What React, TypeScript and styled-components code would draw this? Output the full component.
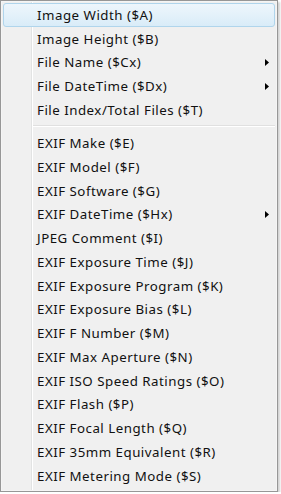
import React from 'react'
import styled, { createGlobalStyle, css } from 'styled-components'

const GlobalStyle = createGlobalStyle`
    html, body {
        margin: 0;
        padding: 0;
        background: #fff;
    }
    body {
        font-family: 'Noto Sans', 'Open Sans', sans-serif;
    }
`

const Menu = styled.div`
    width: 272px;
    padding: 2px 2px 4px;
    border: 1px solid #979797;
    box-shadow: inset 0 0 0 1px #f5f5f5, 2px 2px 2px rgba(0, 0, 0, 0.18);
    /* icon gutter line */
    background: linear-gradient(
        to right,
        #f0f0f0 30px,
        #e2e3e3 30px,
        #e2e3e3 31px,
        #ffffff 31px,
        #ffffff 32px,
        #f0f0f0 32px
    );
`

const Item = styled.div<{ $active?: boolean }>`
    box-sizing: border-box;
    height: 23.75px;
    display: flex;
    align-items: center;
    padding: 0 0 0 33px;
    border: 1px solid transparent;
    border-radius: 3px;
    font-size: 13.3px;
    letter-spacing: 0.5px;
    color: #111;
    white-space: nowrap;
    ${(p) =>
        p.$active &&
        css`
            border-color: #b0d5ec;
            background: linear-gradient(to bottom, #eef6fc, #d9ecf8);
        `}
`

const Label = styled.span`
    flex: 1;
`

const Arrow = styled.svg`
    width: 4px;
    height: 7px;
    margin-right: 5px;
`

const Separator = styled.div`
    height: 9.4px;
    margin-left: 30px;
    display: flex;
    align-items: center;
    &::after {
        content: '';
        flex: 1;
        height: 1px;
        border-bottom: 1px solid #fff;
        background: #e0e0e0;
    }
`

const first = [
    { label: 'Image Width ($A)', active: true },
    { label: 'Image Height ($B)' },
    { label: 'File Name ($Cx)', sub: true },
    { label: 'File DateTime ($Dx)', sub: true },
    { label: 'File Index/Total Files ($T)' },
]

const second = [
    { label: 'EXIF Make ($E)' },
    { label: 'EXIF Model ($F)' },
    { label: 'EXIF Software ($G)' },
    { label: 'EXIF DateTime ($Hx)', sub: true },
    { label: 'JPEG Comment ($I)' },
    { label: 'EXIF Exposure Time ($J)' },
    { label: 'EXIF Exposure Program ($K)' },
    { label: 'EXIF Exposure Bias ($L)' },
    { label: 'EXIF F Number ($M)' },
    { label: 'EXIF Max Aperture ($N)' },
    { label: 'EXIF ISO Speed Ratings ($O)' },
    { label: 'EXIF Flash ($P)' },
    { label: 'EXIF Focal Length ($Q)' },
    { label: 'EXIF 35mm Equivalent ($R)' },
    { label: 'EXIF Metering Mode ($S)' },
]

type Entry = { label: string; active?: boolean; sub?: boolean }

function MenuItem({ label, active, sub }: Entry) {
    return (
        <Item $active={active}>
            <Label>{label}</Label>
            {sub && (
                <Arrow viewBox="0 0 4 7">
                    <polygon points="0,0 4,3.5 0,7" fill="#000" />
                </Arrow>
            )}
        </Item>
    )
}

export default function App() {
    return (
        <>
            <GlobalStyle />
            <Menu>
                {first.map((e: Entry) => (
                    <MenuItem key={e.label} {...e} />
                ))}
                <Separator />
                {second.map((e: Entry) => (
                    <MenuItem key={e.label} {...e} />
                ))}
            </Menu>
        </>
    )
}
